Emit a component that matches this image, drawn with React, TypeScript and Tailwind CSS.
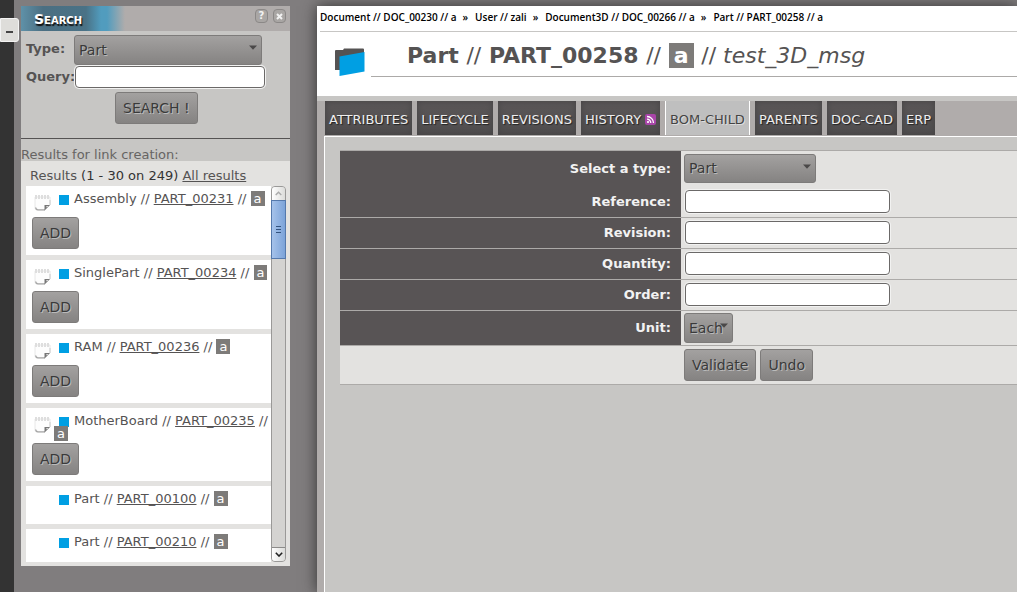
import type { ReactNode } from "react";

const buttonLook =
  "h-8 rounded-[3px] border border-[#7d7b7a] bg-linear-to-b from-[#a3a1a0] to-[#858382] px-[7px] text-[14px] leading-4 text-[#3a3a3a] [text-shadow:1px_1px_0_#bbb]";
const inputLook =
  "rounded-[4px] border border-[#6b6968] bg-white px-1 shadow-[0_0_0_1px_#f2f2f1] outline-none";

type SelectProps = { id: string; options: string[]; className: string };

function Select({ id, options, className }: SelectProps) {
  return (
    <span className={`relative block ${className}`}>
      <select
        id={id}
        className="block size-full appearance-none rounded-[3px] border border-[#7d7b7a] bg-linear-to-b from-[#a3a1a0] to-[#858382] pl-1 text-[14px] text-[#3a3a3a] [text-shadow:1px_1px_0_#bbb]"
      >
        {options.map((o) => (
          <option key={o}>{o}</option>
        ))}
      </select>
      <svg className="pointer-events-none absolute top-[10px] right-[5px]" width="8" height="5" viewBox="0 0 8 5">
        <path d="M0 .5h8L4 4.7z" fill="#4a4848" />
      </svg>
    </span>
  );
}

function Badge() {
  return <span className="bg-[#7d7b79] px-[3px] text-white">a</span>;
}

function Paper() {
  return (
    <svg className="mt-[2px] shrink-0" width="17" height="17" viewBox="0 0 17 17">
      <path d="M1 3h15v8l-5 5H3q-2 0-2-2z" fill="#fdfdfd" stroke="#e2e2e2" strokeWidth=".8" />
      <path d="M1 3h15" stroke="#dedede" strokeWidth="4" strokeDasharray="2 1" />
      <path d="M1.500 13.500q.5 2.300 2.500 2.300H11" fill="none" stroke="#a8a8a8" strokeWidth="1.200" />
      <path d="M16 6v5" stroke="#ccc" />
      <path d="M10.500 16.500v-5.500H16z" fill="#777" />
      <path d="M12.500 13.500v-1.500h1.800z" fill="#fff" />
    </svg>
  );
}

const results = [
  { type: "Assembly", ref: "PART_00231", add: true },
  { type: "SinglePart", ref: "PART_00234", add: true },
  { type: "RAM", ref: "PART_00236", add: true },
  { type: "MotherBoard", ref: "PART_00235", add: true },
  { type: "Part", ref: "PART_00100", add: false },
  { type: "Part", ref: "PART_00210", add: false },
];

function Scrollbar() {
  return (
    <div aria-hidden="true" className="flex w-[15px] shrink-0 flex-col rounded-[4px] border border-[#9a9998] bg-[#d4d3d1]">
      <div className="flex h-[13px] items-center justify-center rounded-t-[3px] bg-linear-to-r from-white to-[#dcdcda]">
        <svg width="7" height="5" viewBox="0 0 7 5">
          <path d="M.7 4 3.500 1.200 6.300 4" fill="none" stroke="#aaa" strokeWidth="1.400" />
        </svg>
      </div>
      <div className="-mx-px flex h-[59px] items-center justify-center border border-[#5579ac] bg-linear-to-r from-[#a5c2ea] to-[#7ca3d9]">
        <svg width="5" height="7" viewBox="0 0 5 7">
          <path d="M0 .5h5M0 3.500h5M0 6.500h5" stroke="#34547f" />
        </svg>
      </div>
      <div className="mt-auto flex h-[14px] items-center justify-center rounded-b-[3px] border-t border-[#8c8b8a] bg-linear-to-r from-white to-[#dcdcda]">
        <svg width="8" height="5" viewBox="0 0 8 5">
          <path d="M.8.800 4 4 7.200.800" fill="none" stroke="#222" strokeWidth="1.600" />
        </svg>
      </div>
    </div>
  );
}

function HeaderButton({ label, children }: { label: string; children: ReactNode }) {
  return (
    <button
      aria-label={label}
      className="flex h-[14px] w-[13px] items-center justify-center rounded-[4px] border border-[#8b8887] bg-[#a9a6a4] text-[10px] leading-3 font-bold text-[#f2f2f2]"
    >
      {children}
    </button>
  );
}

function SearchPanel() {
  return (
    <aside className="mt-[6px] ml-[7px] w-[269px] shrink-0 self-start bg-[#c7c6c4]">
      <header className="flex h-[25px] justify-between bg-[#b0acab] bg-[linear-gradient(90deg,#5f91a8_0,#4b6f82_22px,#4a7286_65px,#519cbe_80px,#519cbe_86px,#b0acab_104px)] pr-1 pl-[13px]">
        <h2 className="text-[14px] leading-[26px] font-bold text-white [font-variant:small-caps] [text-shadow:1px_2px_1px_#111]">
          Search
        </h2>
        <div className="flex gap-[5px] pt-[3px]">
          <HeaderButton label="Help">?</HeaderButton>
          <HeaderButton label="Close">
            <svg width="7" height="7" viewBox="0 0 7 7">
              <path d="M1 1l5 5M6 1 1 6" stroke="#f2f2f2" strokeWidth="2" />
            </svg>
          </HeaderButton>
        </div>
      </header>
      <form className="h-[108px] border-b border-[#555353] pt-1 pl-[5px]">
        <div className="flex">
          <label htmlFor="search-type" className="w-12 pt-[6px] text-[13px] leading-4 font-bold text-[#555353]">
            Type:
          </label>
          <Select id="search-type" options={["Part"]} className="h-[30px] w-[188px]" />
        </div>
        <div className="mt-px flex">
          <label htmlFor="search-query" className="w-[49px] pt-[3px] text-[13px] leading-4 font-bold text-[#555353]">
            Query:
          </label>
          <input id="search-query" className={`h-[22px] w-[190px] ${inputLook}`} />
        </div>
        <div className="mt-1 flex pl-[89px]">
          <button type="button" className={buttonLook}>SEARCH !</button>
        </div>
      </form>
      <p className="h-[22px] pt-2 text-[13px] leading-[15px] text-[#666463]">Results for link creation:</p>
      <div className="bg-[#e3e2e0] pr-1 pb-1 pl-[5px]">
        <p className="h-[25px] pt-[7px] pl-1 text-[13px] leading-[15px] text-[#555353]">
          Results <span className="text-[#333]">(1 - 30 on 249)</span>{" "}
          <a href="#all" className="underline">All results</a>
        </p>
        <div className="flex h-[376px]">
          <ul className="flex min-w-0 flex-1 flex-col gap-[5px] overflow-hidden">
            {results.map((r) => (
              <li key={r.ref} className="min-h-[38px] shrink-0 bg-white py-[6px] pl-[6px]">
                <div className="flex min-h-[25px] pl-[2px] text-[13px] leading-[13px] text-[#555353]">
                  {r.add ? <Paper /> : <span className="w-[17px] shrink-0" />}
                  <div className="pb-[3px] pl-[3px]">
                    <span className="mr-[5px] ml-[5px] inline-block size-[10px] bg-[#009fe3] align-[-2px]" />
                    {r.type} // <a href={`#${r.ref}`} className="underline">{r.ref}</a> // <Badge />
                  </div>
                </div>
                {r.add && <button className={buttonLook}>ADD</button>}
              </li>
            ))}
          </ul>
          <Scrollbar />
        </div>
      </div>
    </aside>
  );
}

const crumbs = ["Document // DOC_00230 // a", "User // zali", "Document3D // DOC_00266 // a", "Part // PART_00258 // a"];
const tabs = ["ATTRIBUTES", "LIFECYCLE", "REVISIONS", "HISTORY", "BOM-CHILD", "PARENTS", "DOC-CAD", "ERP"];

function Rss() {
  return (
    <svg width="11" height="11" viewBox="0 0 11 11">
      <rect width="11" height="11" rx="2" fill="#a845a8" />
      <circle cx="3" cy="8" r="1.100" fill="#fff" />
      <path d="M2 5.200A3.800 3.800 0 0 1 5.800 9M2 2.500A6.500 6.500 0 0 1 8.500 9" fill="none" stroke="#fff" strokeWidth="1.300" />
    </svg>
  );
}

function Row({ label, id, last, children }: { label: string; id: string; last?: boolean; children: ReactNode }) {
  return (
    <tr className={last ? "" : "border-b border-[#acaaa8]"}>
      <th scope="row" className="w-[341px] bg-[#585455] pr-[10px] text-right text-[13px] leading-4 font-bold text-[#f2f2f2]">
        <label htmlFor={id}>{label}</label>
      </th>
      <td className="bg-[#e3e2e0] pl-[3px]">{children}</td>
    </tr>
  );
}

const fields = ["Reference", "Revision", "Quantity", "Order"];

export default function App() {
  return (
    <div className="flex min-h-screen overflow-hidden bg-[#807d7e] font-['DejaVu_Sans',sans-serif]">
      <div className="relative w-[14px] shrink-0 bg-[#333]">
        <button
          aria-label="Collapse"
          className="absolute top-[18px] left-0 flex h-6 w-[19px] items-center justify-center rounded-r-[3px] border border-[#f3f3f3] bg-[#deddda]"
        >
          <span className="mt-1 h-[2px] w-[7px] bg-[#444]" />
        </button>
      </div>
      <SearchPanel />
      <main className="mt-[6px] ml-[27px] flex min-w-0 flex-1 flex-col bg-[#b0acab] shadow-[0_0_14px_#333]">
        <header className="h-[90px] bg-white">
          <nav className="ml-[3px] flex h-[26px] gap-[6px] border-b border-[#c7c6c4] pt-1 font-['Open_Sans',sans-serif] text-[10px] leading-[14px] font-semibold whitespace-nowrap text-black">
            {crumbs.map((c, i) => (
              <span key={c} className="flex gap-[7px]">
                {i > 0 && <span>»</span>}
                <a href="#crumb">{c}</a>
              </span>
            ))}
          </nav>
          <div className="flex">
            <svg className="mt-[15px] ml-[17px] shrink-0" width="31" height="30" viewBox="0 0 31 30">
              <path d="M1 4q0-1 1-1h7l1-1.500h19q1 0 1 1V23H1z" fill="#555353" />
              <path d="M5.500 9.500 30.500 5v19.500L5.500 29z" fill="#009fe3" />
            </svg>
            <h1 className="ml-[6px] h-[45px] flex-1 border-b border-[#acaaa8] pt-[10px] pl-9 text-[22px] leading-7 font-bold whitespace-nowrap text-[#555353]">
              Part <span className="font-normal">//</span> PART_00258 <span className="font-normal">//</span>{" "}
              <span className="bg-[#7d7b79] px-[5px] text-white">a</span>{" "}
              <span className="font-normal">// <em>test_3D_msg</em></span>
            </h1>
          </div>
        </header>
        <nav className="flex gap-[5px] border-t-[5px] border-[#c7c6c4] pl-2">
          {tabs.map((t) => (
            <a
              key={t}
              href={`#${t}`}
              className={`flex h-[34px] items-center gap-1 px-1 pt-[3px] text-[13px] leading-4 ${
                t === "BOM-CHILD"
                  ? "border-x border-white bg-[#bfbfbf] text-[#444] [text-shadow:1px_1px_0_#ddd]"
                  : "bg-linear-to-b from-[#5b5758] to-[#4f4d4e] text-[#eee] shadow-[inset_0_0_6px_#444243] [text-shadow:1px_1px_1px_#222]"
              }`}
            >
              {t}
              {t === "HISTORY" && <Rss />}
            </a>
          ))}
        </nav>
        <section className="mt-px ml-[7px] flex-1 border-t border-l border-white bg-[#c7c6c4] pt-[13px] pl-[15px]">
          <form>
            <table className="w-full border-collapse border-y border-[#acaaa8]">
              <tbody>
                <Row label="Select a type:" id="type" last>
                  <div className="h-9 pt-[3px]">
                    <Select id="type" options={["Part"]} className="h-[29px] w-[132px]" />
                  </div>
                </Row>
                {fields.map((f) => (
                  <Row key={f} label={`${f}:`} id={f}>
                    <div className="flex h-[30px] items-start pt-[3px] pl-px">
                      <input id={f} className={`h-[23px] w-[205px] ${inputLook}`} />
                    </div>
                  </Row>
                ))}
                <Row label="Unit:" id="unit">
                  <div className="flex h-[34px] items-center">
                    <Select id="unit" options={["Each"]} className="h-[30px] w-[49px]" />
                  </div>
                </Row>
                <tr>
                  <td className="bg-[#e3e2e0]" />
                  <td className="bg-[#e3e2e0] pl-[3px]">
                    <div className="flex h-[38px] items-center gap-1">
                      <button type="button" className={buttonLook}>Validate</button>
                      <button type="button" className={buttonLook}>Undo</button>
                    </div>
                  </td>
                </tr>
              </tbody>
            </table>
          </form>
        </section>
      </main>
    </div>
  );
}
